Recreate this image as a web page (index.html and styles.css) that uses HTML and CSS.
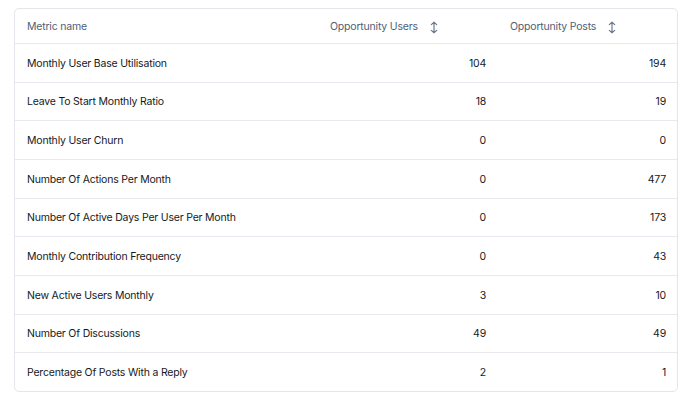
FILE: index.html
```html
<!DOCTYPE html>
<html>
<head>
<meta charset="utf-8">
<link rel="stylesheet" href="styles.css">
</head>
<body>
<div class="card">
  <table class="metrics">
    <thead>
      <tr>
        <th class="c-name">Metric name</th>
        <th class="c-num"><span class="th-inner">Opportunity Users<svg class="sort" width="8" height="13" viewBox="0 0 8 13"><path d="M4 1.2V11.8M1.3 3.6L4 1.2L6.7 3.6M1.3 9.4L4 11.8L6.7 9.4" fill="none" stroke="#6b7a90" stroke-width="1.2" stroke-linecap="round" stroke-linejoin="round"/></svg></span></th>
        <th class="c-num"><span class="th-inner">Opportunity Posts<svg class="sort" width="8" height="13" viewBox="0 0 8 13"><path d="M4 1.2V11.8M1.3 3.6L4 1.2L6.7 3.6M1.3 9.4L4 11.8L6.7 9.4" fill="none" stroke="#6b7a90" stroke-width="1.2" stroke-linecap="round" stroke-linejoin="round"/></svg></span></th>
      </tr>
    </thead>
    <tbody>
      <tr><td>Monthly User Base Utilisation</td><td class="num">104</td><td class="num">194</td></tr>
      <tr><td>Leave To Start Monthly Ratio</td><td class="num">18</td><td class="num">19</td></tr>
      <tr><td>Monthly User Churn</td><td class="num">0</td><td class="num">0</td></tr>
      <tr><td>Number Of Actions Per Month</td><td class="num">0</td><td class="num">477</td></tr>
      <tr><td>Number Of Active Days Per User Per Month</td><td class="num">0</td><td class="num">173</td></tr>
      <tr><td>Monthly Contribution Frequency</td><td class="num">0</td><td class="num">43</td></tr>
      <tr><td>New Active Users Monthly</td><td class="num">3</td><td class="num">10</td></tr>
      <tr><td>Number Of Discussions</td><td class="num">49</td><td class="num">49</td></tr>
      <tr><td>Percentage Of Posts With a Reply</td><td class="num">2</td><td class="num">1</td></tr>
    </tbody>
  </table>
</div>
</body>
</html>
```
FILE: styles.css
```css
html, body {
  margin: 0;
  padding: 0;
  background: #ffffff;
}
body {
  padding: 8px 12px 0 14px;
  font-family: Inter, "Liberation Sans", sans-serif;
  font-size: 10.5px;
  letter-spacing: -0.2px;
  color: #16191d;
}
.card {
  width: 662px;
  border: 1px solid #e3e7ec;
  border-radius: 5px;
  overflow: hidden;
  background: #fff;
}
.metrics {
  width: 100%;
  border-collapse: collapse;
  table-layout: fixed;
}
.metrics th {
  height: 32px;
  padding: 2px 12px 0;
  font-weight: 400;
  color: #4f5f77;
  text-align: left;
  border-bottom: 1px solid #e6eaef;
  line-height: 14px;
}
.c-name { width: 279px; }
.c-num { width: 156px; }
.th-inner {
  display: inline-flex;
  align-items: center;
  gap: 12px;
}
.sort { display: block; }
.metrics td {
  height: 35.67px;
  padding: 2px 12px 0;
  line-height: 14px;
  border-bottom: 1px solid #e6eaef;
}
.metrics tbody tr:last-child td { border-bottom: none; }
.metrics td.num { text-align: right; }
```
